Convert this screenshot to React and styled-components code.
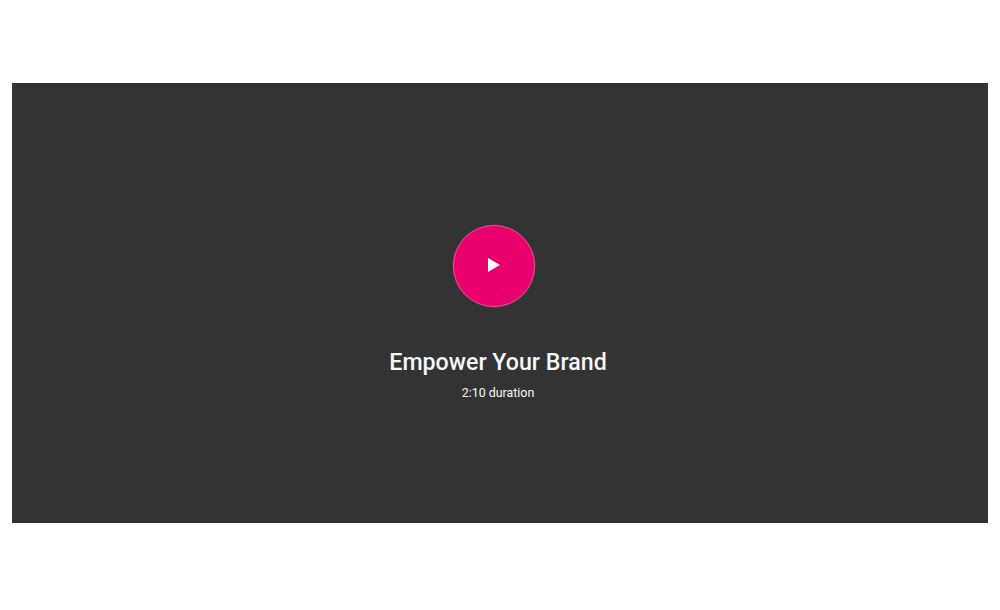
import React from 'react';
import styled, { createGlobalStyle } from 'styled-components';

const GlobalStyle = createGlobalStyle`
  *, *::before, *::after { box-sizing: border-box; }
  body { margin: 0; background: #ffffff; font-family: Roboto, sans-serif; }
`;

const Page = styled.main`
  height: 610px;
  padding: 83px 12px 87px;
  background: #ffffff;
`;

const Banner = styled.section`
  display: flex;
  flex-direction: column;
  align-items: center;
  height: 440px;
  padding: 142px 8px 0 0;
  background: #333333;
  color: #f7f7f7;
`;

const PlayButton = styled.button`
  display: flex;
  align-items: center;
  justify-content: center;
  width: 82px;
  height: 82px;
  margin: 0 4px 0 0;
  padding: 0 0 2px;
  border: 1px solid #ee4a8e;
  border-radius: 50%;
  background: #ea006c;
  box-shadow: 0 0 0 0.5px rgba(238, 74, 142, 0.4);
  cursor: pointer;
`;

const PlayIcon = styled.svg`
  display: block;
  width: 12px;
  height: 14px;
  fill: #ffffff;
`;

const Title = styled.h1`
  margin: 39px 0 0 4px;
  font-size: 23.2px;
  font-weight: 500;
  line-height: 32px;
  white-space: nowrap;
`;

const Duration = styled.p`
  margin: 4px 0 0 4px;
  font-size: 12.4px;
  font-weight: 400;
  line-height: 21px;
`;

export default function App() {
  return (
    <>
      <GlobalStyle />
      <Page>
        <Banner>
          <PlayButton aria-label="Play video">
            <PlayIcon viewBox="0 0 12 14" aria-hidden="true">
              <path d="M0 0 12 7 0 14Z" />
            </PlayIcon>
          </PlayButton>
          <Title>Empower Your Brand</Title>
          <Duration>2:10 duration</Duration>
        </Banner>
      </Page>
    </>
  );
}
